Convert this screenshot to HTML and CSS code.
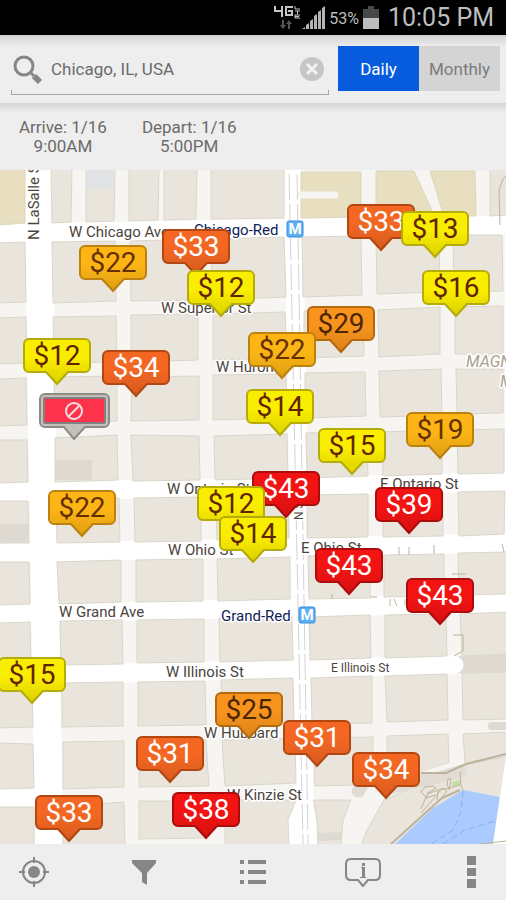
FILE: index.html
```
<!DOCTYPE html>
<html lang="en">
<head>
	<meta charset="UTF-8">
	<meta name="viewport" content="width=device-width, initial-scale=1">
	<title>Parking - Chicago, IL, USA</title>
	<link rel="stylesheet" href="styles.css">
</head>
<body>
	<div id="status">
		<svg class="network" width="28" height="26" viewBox="0 0 28 26">
			<g fill="none" stroke="#c4c4c4" stroke-width="2">
				<path d="M2 1v5h8M9 1v11M20 2h-7v8h6V6h-4"/>
				<path d="M22 1v3h5M22 6h5M24.500 6v3M27 10h-5v3h5M22 11.500h4" stroke-width="1"/>
			</g>
			<path d="M9 15h2v5h2l-3 4-3-4h2zM15 24h2v-5h2l-3-4-3 4h2z" fill="#555"/>
		</svg>
		<svg class="signal" width="23" height="24" viewBox="0 0 23 24" fill="#b4b4b4">
			<path d="M0 23l3-2v2zM4 19l3-2v6H4zM8 15l3-2v10H8zM12 10l3-2v15h-3zM16 6l3-2v19h-3zM20 2l3-2v23h-3z"/>
		</svg>
		<span class="percent">53%</span>
		<svg class="battery" width="16" height="24" viewBox="0 0 16 24">
			<path d="M5 0h6v3h5v9H0V3h5z" fill="#484848"/>
			<path d="M0 12h16v11H0z" fill="#bebebe"/>
		</svg>
		<span class="clock">10:05 PM</span>
	</div>

	<form id="search">
		<div class="field">
			<label for="place" title="Search">
				<svg width="30" height="30" viewBox="0 0 30 30" fill="none" stroke="#868686">
					<circle cx="11" cy="11" r="9" stroke-width="3"/>
					<path d="M17 17l4 4" stroke-width="3"/>
					<path d="M21 21l6 6" stroke-width="6"/>
				</svg>
			</label>
			<input type="text" id="place" value="Chicago, IL, USA">
			<button type="button" class="clear" title="Clear">
				<svg width="24" height="24" viewBox="0 0 24 24">
					<circle cx="12" cy="12" r="12" fill="#c6c6c6"/>
					<path d="M7 7l10 10M17 7L7 17" stroke="#f2f2f2" stroke-width="3"/>
				</svg>
			</button>
		</div>
		<div class="period">
			<button type="button" class="on">Daily</button>
			<button type="button">Monthly</button>
		</div>
	</form>

	<div id="dates">
		<button type="button">Arrive: 1/16<br>9:00AM</button>
		<button type="button">Depart: 1/16<br>5:00PM</button>
	</div>

	<div id="map">
		<svg class="streets" viewBox="0 170 506 674" preserveAspectRatio="xMinYMin slice">
			<!-- main streets -->
			<g class="main">
				<path d="M0 233L506 225M0 492L506 482M0 553L506 543M0 614L506 603M0 676L454 665M0 798H34"/>
				<path class="wide" d="M38 170L49 844"/>
				<path d="M293 170L304 800"/>
			</g>
			<path d="M505 170h1v590h-1zM296 800l-8 20v24h29v-24l-5-20z" fill="#fff"/>

			<!-- blocks -->
			<g class="block">
				<path d="M51 168H72L71 222 52 223zM86 168H115L114 221 86 222zM129 168H159L158 220 129 221zM164 168H197L196 219 164 220zM211 168H284V218L211 219zM490 168H508V215L490 216z"/>
				<path d="M-2 243L25 242 26 302-2 303zM52 242L115 241 116 301 53 303zM130 241L197 239 198 300 131 301zM211 239L284 237 286 297 212 300zM302 237L361 236 362 295 303 297zM376 236L439 235 440 292 377 294zM453 235H502L503 291 454 292z"/>
				<path d="M-2 318L26 317 27 363-2 364zM53 317L116 316 117 362 54 363zM131 315L198 314V360L131 362zM213 314L285 312 287 358 213 360zM304 311L363 310 364 356 304 358zM378 310L440 307V354L379 357zM455 307L503 306V354H455z"/>
				<path d="M-2 379L26 378 27 425-2 426zM54 377L117 376V421L54 424zM132 377L199 376V420L131 421zM213 375L286 374 287 418 213 420zM305 373L365 372 366 416 305 418zM379 371L441 369 442 415 380 417zM456 369H503V413L457 414z"/>
				<path d="M-2 440H27L28 482-2 483zM55 438L117 435 118 480 55 482zM131 435L199 436 200 480 133 481zM214 436L287 434 288 478 215 480zM306 433L367 432 368 476 307 478zM382 432L442 430V474L383 476zM457 430L504 429V473L458 474z"/>
				<path d="M-2 501H28L29 543H-2zM56 500L119 498 120 542 57 543zM134 498L201 497V541L135 542zM216 496L288 495 289 538 217 540zM307 495L368 494V537L307 538zM383 493L443 492V536L383 537zM458 492L505 491 504 534 459 536z"/>
				<path d="M-2 562H29L30 604-2 605zM57 562L121 560V602L59 604zM136 560L203 559V601L136 602zM217 559L290 557V599L218 601zM308 556L370 555V598L309 599zM384 555L444 554V596L384 597zM458 553L508 552V594L459 595z"/>
				<path d="M-2 623L30 622 31 665-2 667zM60 621L122 620 123 664 61 665zM137 620L204 619V662L137 663zM219 618L292 617 293 660 220 662zM309 617L370 615 371 658 310 660zM385 615L446 614 447 656 385 658zM460 614L508 612V654L462 656z"/>
				<path d="M-2 685L32 684 33 727-2 728zM62 683L123 682V726L62 727zM138 682L205 681 206 725 138 726zM221 680L293 678 294 724 222 725zM311 678L372 676V723L312 724zM385 676L447 674 448 720 387 722zM462 673L508 672V719L463 720z"/>
				<path d="M-2 743L33 744 34 788-2 789zM63 742L124 741V787L63 789zM139 741L206 740 209 786 139 787zM222 740L295 738 296 783 225 786zM313 738L373 737V770L355 785 315 786zM387 736L448 734 449 763 420 772 387 775zM463 734L508 732V758L465 763z"/>
				<path d="M-2 807H34V846H-2zM63 806L124 802 125 846H63zM139 801H206L208 838 139 839zM225 800H296L288 820 289 846H225zM314 800H351L343 820 341 846H318L317 822zM384 800L465 765 508 756V846H361L366 832z"/>
			</g>
			<path d="M-1 168H25V223L-1 225zM301 172H361V217L301 218zM376 171H414L434 215 376 216zM430 171H475L476 216H444z" class="campus"/>
			<path d="M301 195h34" stroke="#f6f5f1" stroke-width="7" stroke-linecap="round"/>
			<path d="M87 170h26v19H87z" fill="#e1e3e5"/>
			<path d="M55 460h37v20H55zM0 524h28v19H0zM459 656l47-2v18l-47 1zM318 833l24-1v8l-24 1z" class="shade"/>
			<path d="M454 665h1" stroke="#fff" stroke-width="17" stroke-linecap="round"/>
			<path d="M492 726h14" stroke="#dedad2" stroke-width="8" stroke-linecap="round"/>
			<path d="M358 791l30-3 36-8 36-9" stroke="#e0dcd4" stroke-width="13" stroke-linecap="round" fill="none"/>
			<path d="M420 772l36-11 7 3-10 3-20 6z" fill="#f6f5f1"/>
			<path d="M368 787h22l-22 36h-20z" fill="#f6f5f1"/>

			<!-- river -->
			<path d="M395 844L433 808 463 790 500 797 493 844z" fill="#abcbff"/>
			<path d="M506 756L493 844H506z" fill="#fff"/>
			<path d="M463 791l-2 21-8 18-22 14M443 844l22-14 30-9" class="ferry"/>
			<path d="M452 782l8-2 1 5-9 2z" fill="#c6dfa8"/>
			<g class="track">
				<path class="walk" d="M421 773h25l20-9 40-10M391 844l41-37 10-9 18-8"/>
				<path d="M460 772l1 13 2 5M421 809l5-12-5-5 4-5 8-1 3 2-8 5-2 6M421 813l10-11 11-14 5 3-8 10M427 794l11-4 12-2 10-3M449 788l-2-3 1-6h3l-2 11M426 798l9-3M438 790l-1 10M480 844l26-3"/>
				<path d="M453 635h10v16l-9 5M500 225l-1-35 4-11 3-3M399 547v8M409 547v8M434 545v9M502 544l2 8M452 574h14M332 594v5M370 597h7M390 599v7M394 599l3 7M405 599v6"/>
			</g>

			<!-- rail line under State St -->
			<path d="M289 170L303 844M297 170L308 844" class="rail"/>
			<path d="M289 170L303 844M297 170L308 844" class="gaps"/>

			<g class="name">
				<text x="69" y="237">W Chicago Ave</text>
				<text x="161" y="313">W Superior St</text>
				<text x="216" y="372">W Huron</text>
				<text x="167" y="494">W Ontario St</text>
				<text x="380" y="489">E Ontario St</text>
				<text x="168" y="555">W Ohio St</text>
				<text x="301" y="553">E Ohio St</text>
				<text x="59" y="617">W Grand Ave</text>
				<text x="166" y="677">W Illinois St</text>
				<text x="331" y="672" class="small">E Illinois St</text>
				<text x="204" y="738">W Hubbard St</text>
				<text x="227" y="800">W Kinzie St</text>
				<text transform="translate(39 240) rotate(-90)">N LaSalle St</text>
				<text transform="translate(303 520) rotate(-90)" class="small">N S</text>
			</g>
			<g class="name station">
				<text x="194" y="235">Chicago-Red</text>
				<text x="221" y="621">Grand-Red</text>
			</g>
			<g class="name area">
				<text x="466" y="367">MAGNIFICENT</text>
				<text x="500" y="387">MILE</text>
			</g>
			<g class="metro">
				<rect x="287" y="221" width="16" height="16" rx="2"/>
				<text x="295" y="234">M</text>
				<rect x="299" y="607" width="16" height="16" rx="2"/>
				<text x="307" y="620">M</text>
			</g>
		</svg>

		<!-- shared pin outline -->
		<svg class="defs" width="0" height="0">
			<defs>
				<linearGradient id="shadow" x1="0" y1="0" x2="0" y2="1">
					<stop offset="0.400" stop-color="#000" stop-opacity="0"/>
					<stop offset="1" stop-color="#000" stop-opacity="0.120"/>
				</linearGradient>
				<symbol id="pin" viewBox="0 0 68 48">
					<path d="M6 1h56a5 5 0 0 1 5 5v23a5 5 0 0 1-5 5H45L34 46 23 34H6a5 5 0 0 1-5-5V6a5 5 0 0 1 5-5z" stroke-width="2"/>
					<path d="M6 2h56a4 4 0 0 1 4 4v23a4 4 0 0 1-4 4H45L34 45 23 33H6a4 4 0 0 1-4-4V6a4 4 0 0 1 4-4z" fill="url(#shadow)" stroke="none"/>
				</symbol>
			</defs>
		</svg>

		<button class="pin orange" style="left:347px;top:34px"><svg><use href="#pin"/></svg><span>$33</span></button>
		<button class="pin yellow" style="left:401px;top:41px"><svg><use href="#pin"/></svg><span>$13</span></button>
		<button class="pin orange" style="left:162px;top:59px"><svg><use href="#pin"/></svg><span>$33</span></button>
		<button class="pin amber" style="left:79px;top:75px"><svg><use href="#pin"/></svg><span>$22</span></button>
		<button class="pin yellow" style="left:187px;top:100px"><svg><use href="#pin"/></svg><span>$12</span></button>
		<button class="pin yellow" style="left:422px;top:100px"><svg><use href="#pin"/></svg><span>$16</span></button>
		<button class="pin dark" style="left:307px;top:136px"><svg><use href="#pin"/></svg><span>$29</span></button>
		<button class="pin amber" style="left:248px;top:162px"><svg><use href="#pin"/></svg><span>$22</span></button>
		<button class="pin yellow" style="left:23px;top:168px"><svg><use href="#pin"/></svg><span>$12</span></button>
		<button class="pin orange" style="left:102px;top:180px"><svg><use href="#pin"/></svg><span>$34</span></button>
		<button class="pin yellow" style="left:246px;top:219px"><svg><use href="#pin"/></svg><span>$14</span></button>
		<button class="pin full" style="left:39px;top:223px" title="Not available">
			<svg viewBox="0 0 71 48">
				<path d="M6 1h59a5 5 0 0 1 5 5v23a5 5 0 0 1-5 5H46L35 46 25 34H6a5 5 0 0 1-5-5V6a5 5 0 0 1 5-5z" fill="#c5c1ba" stroke="#8d8a86" stroke-width="2"/>
				<rect x="5" y="5" width="61" height="25" rx="1" fill="#ff324b" stroke="#858080" stroke-width="2"/>
				<g fill="none" stroke="#f4dfe2" stroke-width="2">
					<circle cx="35" cy="18" r="8"/>
					<path d="M30 23l10-10"/>
				</g>
			</svg>
		</button>
		<button class="pin amber" style="left:406px;top:242px"><svg><use href="#pin"/></svg><span>$19</span></button>
		<button class="pin yellow" style="left:318px;top:258px"><svg><use href="#pin"/></svg><span>$15</span></button>
		<button class="pin red" style="left:252px;top:301px"><svg><use href="#pin"/></svg><span>$43</span></button>
		<button class="pin yellow" style="left:197px;top:316px"><svg><use href="#pin"/></svg><span>$12</span></button>
		<button class="pin red" style="left:375px;top:317px"><svg><use href="#pin"/></svg><span>$39</span></button>
		<button class="pin amber" style="left:48px;top:320px"><svg><use href="#pin"/></svg><span>$22</span></button>
		<button class="pin yellow" style="left:219px;top:346px"><svg><use href="#pin"/></svg><span>$14</span></button>
		<button class="pin red" style="left:315px;top:378px"><svg><use href="#pin"/></svg><span>$43</span></button>
		<button class="pin red" style="left:406px;top:408px"><svg><use href="#pin"/></svg><span>$43</span></button>
		<button class="pin yellow" style="left:-2px;top:487px"><svg><use href="#pin"/></svg><span>$15</span></button>
		<button class="pin dark" style="left:215px;top:522px"><svg><use href="#pin"/></svg><span>$25</span></button>
		<button class="pin orange" style="left:283px;top:550px"><svg><use href="#pin"/></svg><span>$31</span></button>
		<button class="pin orange" style="left:136px;top:566px"><svg><use href="#pin"/></svg><span>$31</span></button>
		<button class="pin orange" style="left:352px;top:582px"><svg><use href="#pin"/></svg><span>$34</span></button>
		<button class="pin red" style="left:172px;top:622px"><svg><use href="#pin"/></svg><span>$38</span></button>
		<button class="pin orange" style="left:35px;top:625px"><svg><use href="#pin"/></svg><span>$33</span></button>
	</div>

	<div id="toolbar">
		<button title="My location">
			<svg width="30" height="30" viewBox="0 0 30 30">
				<circle cx="15" cy="15" r="11" fill="none" stroke="#868686" stroke-width="2"/>
				<circle cx="15" cy="15" r="6" fill="#868686"/>
				<path d="M15 0v6M15 24v6M0 15h6M24 15h6" stroke="#868686" stroke-width="2"/>
			</svg>
		</button>
		<button title="Filter">
			<svg width="30" height="30" viewBox="0 0 30 30" fill="#868686">
				<path d="M3 3h24v3l-9 10v12l-5-3v-9L3 6z"/>
			</svg>
		</button>
		<button title="List">
			<svg width="30" height="30" viewBox="0 0 30 30" fill="#868686">
				<path d="M2 3h4v4H2zM10 3h18v4H10zM2 13h4v4H2zM10 13h18v4H10zM2 23h4v4H2zM10 23h18v4H10z"/>
			</svg>
		</button>
		<button title="Info">
			<svg width="38" height="30" viewBox="0 0 38 30">
				<path d="M7 2h24q5 0 5 5v11q0 5-5 5h-7l-5 6-5-6H7q-5 0-5-5V7q0-5 5-5z" fill="none" stroke="#868686" stroke-width="2"/>
				<path d="M18 6h3v3h-3zM17 10h4v10h1v1h-6v-1h2v-9h-1z" fill="#868686"/>
			</svg>
		</button>
		<button title="More">
			<svg width="10" height="32" viewBox="0 0 10 32" fill="#868686">
				<path d="M0 0h9v9H0zM0 12h9v8H0zM0 23h9v9H0z"/>
			</svg>
		</button>
	</div>
</body>
</html>
```

FILE: styles.css
```
html {
	height:100%;
}

body {
	margin:0px;
	height:100%;
	display:flex;
	flex-direction:column;
	background:#eeeeee;
	font-family:Roboto, "Liberation Sans", sans-serif;
	font-size:17px;
	color:#6b6b6b;
	overflow:hidden;
}

button, input {
	margin:0px;
	padding:0px;
	border:0px;
	background:none;
	font:inherit;
	color:inherit;
}

button {
	cursor:pointer;
}

svg {
	display:block;
}

/* status bar */

#status {
	display:flex;
	align-items:center;
	justify-content:flex-end;
	flex:none;
	height:35px;
	padding-right:12px;
	background:#000000;
	color:#bebebe;
}

#status .signal {
	margin-left:1px;
}

#status .percent {
	margin:2px 4px 0px 4px;
	font-size:16px;
}

#status .clock {
	margin-left:9px;
	font-size:25px;
}

/* search */

#search {
	display:flex;
	flex:none;
	height:46px;
	padding:11px 6px 11px 11px;
	background:linear-gradient(#d2d2d2, #eeeeee 12px);
}

#search .field {
	display:flex;
	align-items:center;
	flex:1;
	margin-right:9px;
	height:49px;
	background:
		linear-gradient(#a6a6a6, #a6a6a6) left bottom / 1px 5px no-repeat,
		linear-gradient(#a6a6a6, #a6a6a6) right bottom / 1px 5px no-repeat,
		linear-gradient(#a6a6a6, #a6a6a6) left bottom / 100% 1px no-repeat;
}

#search label {
	margin:0px 8px 2px 2px;
}

#search input {
	flex:1;
	min-width:0px;
	margin-bottom:4px;
	outline:none;
}

#search .clear {
	margin:0px 5px 4px 0px;
}

#search .period {
	display:flex;
	height:45px;
}

#search .period button {
	width:81px;
	background:#d4d4d4;
	color:#7c7c7c;
}

#search .period .on {
	background:#065cdc;
	color:#ffffff;
}

#dates {
	display:flex;
	gap:35px;
	flex:none;
	height:52px;
	padding:15px 19px 0px 19px;
	align-items:flex-start;
	background:linear-gradient(#d6d6d6, #eeeeee 10px);
}

#dates button {
	line-height:19px;
}

/* map */

#map {
	position:relative;
	flex:1;
	min-height:0px;
	overflow:hidden;
	background:#f6f5f1;
}

#map .streets {
	width:100%;
	height:100%;
}

#map .defs {
	position:absolute;
}

.main {
	fill:none;
	stroke:#ffffff;
	stroke-width:19px;
}

.main .wide {
	stroke-width:28px;
}

.block {
	fill:#e9e5dd;
	stroke:#dad6c9;
	stroke-width:1px;
}

.campus {
	fill:#e8dfc1;
	stroke:#dcd5bd;
}

.shade {
	fill:#dedad2;
}

.track {
	fill:none;
	stroke:#bdb29c;
	stroke-width:1px;
}

.track .walk {
	stroke-width:2px;
}

.ferry {
	fill:none;
	stroke:#84b0f2;
	stroke-width:1px;
	stroke-dasharray:6 4;
}

.rail {
	fill:none;
	stroke:#d3d3d6;
	stroke-width:1px;
}

.gaps {
	fill:none;
	stroke:#ffffff;
	stroke-width:3px;
	stroke-dasharray:4 26;
}

.name {
	font-size:15px;
	fill:#4a443c;
	stroke:#ffffff;
	stroke-width:3px;
	stroke-linejoin:round;
	paint-order:stroke;
}

.name .small {
	font-size:12px;
}

.station {
	fill:#0f2257;
}

.area {
	font-size:16px;
	font-style:italic;
	fill:#aaa08a;
}

.metro rect {
	fill:#5cb0f8;
	stroke:#3b8bd8;
	stroke-width:1px;
}

.metro text {
	font-size:15px;
	font-weight:bold;
	fill:#ffffff;
	text-anchor:middle;
}

/* price pins */

.pin {
	position:absolute;
	display:grid;
	width:68px;
	height:48px;
	font-size:28px;
	line-height:36px;
}

.pin svg, .pin span {
	grid-area:1 / 1;
	width:100%;
}

.pin svg {
	height:48px;
}

.pin span {
	position:relative;
	text-align:center;
}

.yellow {
	fill:#faee00;
	stroke:#b5ab0a;
	color:#622400;
}

.amber {
	fill:#fdb515;
	stroke:#bd8110;
	color:#653000;
}

.dark {
	fill:#f8941d;
	stroke:#b5690f;
	color:#4b2600;
}

.orange {
	fill:#f36722;
	stroke:#b24712;
	color:#ffffff;
}

.red {
	fill:#f31313;
	stroke:#ac0c0c;
	color:#ffffff;
}

.full {
	width:71px;
}

/* bottom toolbar */

#toolbar {
	display:flex;
	justify-content:space-between;
	flex:none;
	height:56px;
	background:#eeeeee;
}

#toolbar button {
	display:flex;
	align-items:center;
	justify-content:center;
	width:68px;
}
```
